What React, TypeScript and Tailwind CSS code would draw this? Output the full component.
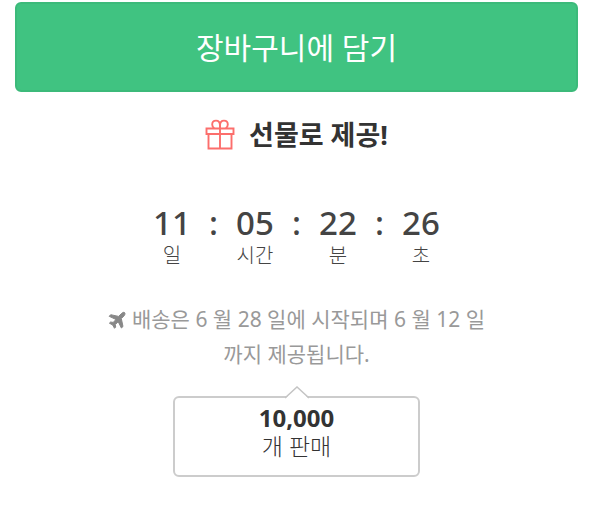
const COUNTDOWN = [
  { value: '11', unit: '일' },
  { value: '05', unit: '시간' },
  { value: '22', unit: '분' },
  { value: '26', unit: '초' },
]

function GiftIcon() {
  return (
    <svg
      viewBox="0 0 30 32"
      className="h-8 w-[30px] shrink-0 text-[#fc6e6c]"
      fill="none"
      stroke="currentColor"
      strokeWidth="1.9"
      aria-hidden="true"
    >
      <path d="M1.5 9.5h27V15h-27z" />
      <path d="M3.5 15v14.500h23V15" />
      <path d="M15 5.500v24" />
      <path d="M15 9.200V6.400C15 3.400 13.200 1.600 11 1.600S7.200 3.200 7.200 5.400c0 1.800 .8 3 2 3.800" />
      <path d="M15 9.200V6.400c0-3 1.800-4.800 4-4.800s3.800 1.600 3.800 3.800c0 1.800-.8 3-2 3.800" />
    </svg>
  )
}

function PlaneIcon() {
  return (
    <svg
      viewBox="0 0 18 18"
      className="mr-1.5 inline h-[18px] w-[18px] align-[-2px] text-[#888]"
      fill="currentColor"
      stroke="currentColor"
      strokeWidth="1"
      strokeLinejoin="round"
      aria-hidden="true"
    >
      <path d="M16.500 1.500c.9.900.5 2.300-.6 3.500l-2.600 2.600 1.700 7.900-1.600 1.500-3.200-6.300-2.900 2.900.4 2.500-1.200 1.200-1.800-3.300-3.300-1.800 1.200-1.200 2.500.4 2.900-2.900L1.200 5.300l1.500-1.600 7.900 1.700 2.600-2.600c1.200-1.200 2.600-1.900 3.300-1.300z" />
    </svg>
  )
}

function Countdown() {
  return (
    <div className="mt-12 flex justify-center text-[#444]">
      {COUNTDOWN.map(({ value, unit }, i) => (
        <div key={unit} className="flex">
          {i > 0 && (
            <span className="w-11 text-center text-[33px] leading-[44px] font-medium">:</span>
          )}
          <div className="w-[39px] text-center">
            <div className="text-[33px] leading-[44px] font-medium">{value}</div>
            <div className="text-xl leading-[22px] font-light whitespace-nowrap">{unit}</div>
          </div>
        </div>
      ))}
    </div>
  )
}

function SoldBadge() {
  return (
    <div className="relative mx-auto mt-6 h-[81px] w-[247px] rounded-md border-2 border-[#ccc] bg-white pt-1.5 text-center text-[#333]">
      <svg
        viewBox="0 0 24 13"
        className="absolute -top-3 left-1/2 h-[13px] w-6 -translate-x-1/2"
        aria-hidden="true"
      >
        <path d="M0 13 12 1l12 12z" fill="#fff" />
        <path d="M0 12 12 1l12 11" fill="none" stroke="#c4c4c4" strokeWidth="1.5" />
      </svg>
      <div className="text-2xl leading-7 font-bold">10,000</div>
      <div className="text-[23px] leading-7 font-light">개 판매</div>
    </div>
  )
}

function App() {
  return (
    <main className="bg-white pt-0.5 pr-[37px] pb-12 pl-[15px] font-['Noto_Sans','Noto_Sans_CJK_KR',sans-serif]">
      <button
        type="button"
        className="block h-[90px] w-full rounded-md border-2 border-[#3cba7a] bg-[#40c381] text-[30px] text-white"
      >
        장바구니에 담기
      </button>

      <div className="mt-[25px] flex items-center justify-center gap-3.5">
        <GiftIcon />
        <strong className="text-[27px] leading-9 font-bold text-[#333]">선물로 제공!</strong>
      </div>

      <Countdown />

      <p className="mx-auto mt-[35px] max-w-[390px] text-center text-[21px] leading-[35px] text-[#999]">
        <PlaneIcon />
        배송은 6 월 28 일에 시작되며 6 월 12 일까지 제공됩니다.
      </p>

      <SoldBadge />
    </main>
  )
}

export default App
